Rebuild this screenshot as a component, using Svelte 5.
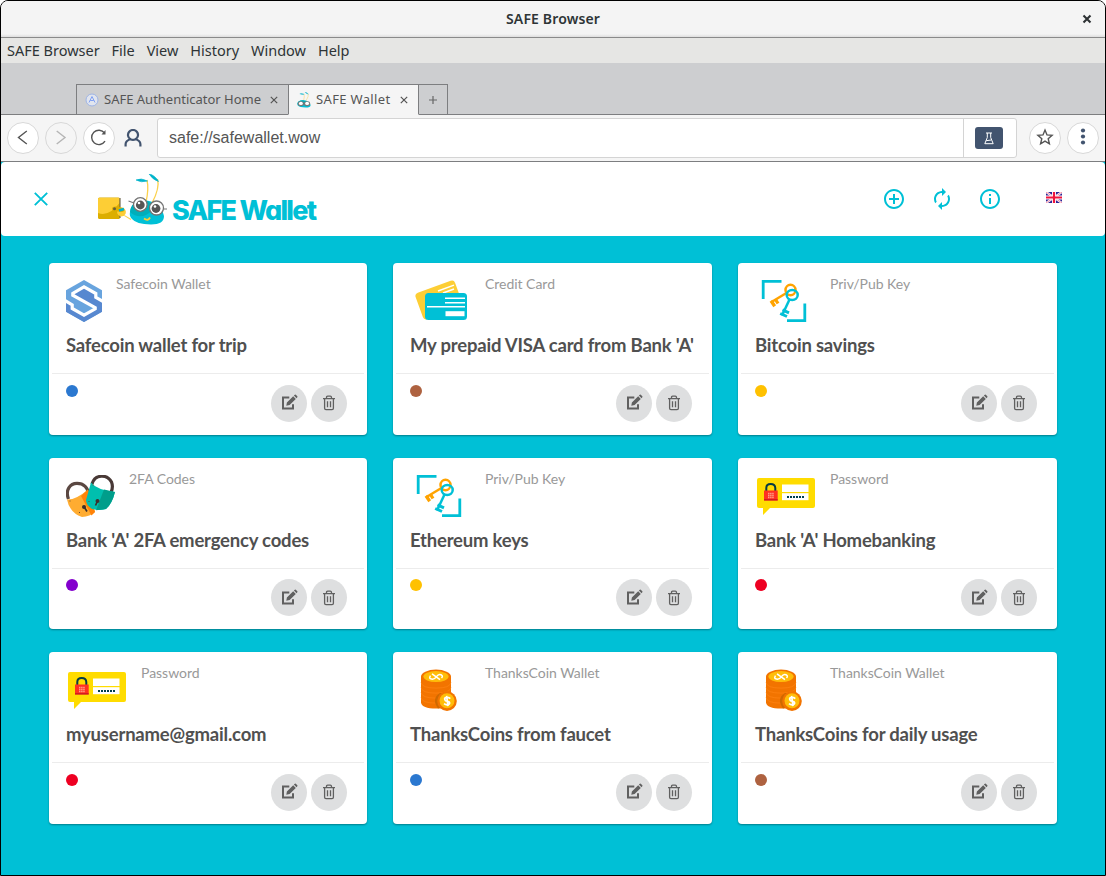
<script>
  const menus = ['SAFE Browser', 'File', 'View', 'History', 'Window', 'Help'];
  const cards = [
    { icon: 'safecoin', kind: 'Safecoin Wallet', title: 'Safecoin wallet for trip', color: '#2b78d0' },
    { icon: 'credit', kind: 'Credit Card', title: "My prepaid VISA card from Bank 'A'", color: '#ae6240' },
    { icon: 'keys', kind: 'Priv/Pub Key', title: 'Bitcoin savings', color: '#ffc100' },
    { icon: 'locks', kind: '2FA Codes', title: "Bank 'A' 2FA emergency codes", color: '#8300cd' },
    { icon: 'keys', kind: 'Priv/Pub Key', title: 'Ethereum keys', color: '#ffc100' },
    { icon: 'password', kind: 'Password', title: "Bank 'A' Homebanking", color: '#ee0022' },
    { icon: 'password', kind: 'Password', title: 'myusername@gmail.com', color: '#ee0022' },
    { icon: 'coins', kind: 'ThanksCoin Wallet', title: 'ThanksCoins from faucet', color: '#2b78d0' },
    { icon: 'coins', kind: 'ThanksCoin Wallet', title: 'ThanksCoins for daily usage', color: '#ae6240' }
  ];
  const iconWidth = { safecoin: 36, locks: 49, credit: 61, keys: 61, password: 61, coins: 61 };
</script>

{#snippet cardIcon(name)}
  <svg class="kind-icon" width={iconWidth[name]} height="42" viewBox="0 0 {iconWidth[name]} 42">
    {#if name === 'safecoin'}
      <clipPath id="hex"><path d="M18 0 36 10.300V31.700L18 42 0 31.700V10.300Z" /></clipPath>
      <g clip-path="url(#hex)">
        <rect width="36" height="42" fill="#68a4de" />
        <path fill="#5788d0" d="M38 22 29.800 17.300V13.500L18 6.800 6.800 13.300V15.200L29.200 27.600V28.800L18 35.200 6.200 28.500V25L-2 20V44H38Z" />
        <path fill="none" stroke="#fff" stroke-width="3.200" d="M38 22 29.800 17.300V13.500L18 6.800 6.800 13.300V15.200L29.200 27.600V28.800L18 35.200 6.200 28.500V25L-2 20" />
      </g>
    {:else if name === 'credit'}
      <rect x="8" y="6" width="42" height="28" rx="3.5" fill="#fdce35" transform="rotate(-20 29 20)" />
      <path d="M28 11 44 5.2M33 13 44 9" stroke="#fff" stroke-width="1.4" />
      <rect x="15" y="13" width="42" height="27" rx="3.5" fill="#00c0d6" />
      <path d="M35 18.3h20M35 22.8h20M17 26.8h38" stroke="#fff" stroke-width="1.5" />
      <rect x="35.5" y="31.2" width="19" height="5" fill="#fff" />
    {:else if name === 'keys'}
      <path d="M8.2 19V1.3H26.5M32 40.7H49.8V23.5" fill="none" stroke="#00c0d6" stroke-width="2.8" />
      <g fill="none" stroke="#ffa300" stroke-width="2.5">
        <ellipse cx="35.5" cy="10" rx="5" ry="5.2" />
        <path d="M31 13.2 16.500 22" />
        <path d="M16 20.800 19.700 26.200M20.500 19.500l2.500 4" stroke-width="3.3" />
      </g>
      <g fill="none" stroke="#00c0d6" stroke-width="2.5">
        <ellipse cx="37.200" cy="15" rx="5.500" ry="5" />
        <path d="M34.500 19.500 27 35.500" />
        <path d="M25.200 33.500 32 36.500M27.500 29.800l6.500 3" stroke-width="3" />
      </g>
    {:else if name === 'locks'}
      <path d="M2.500 24C-1 15 4 8.400 11 8.400S22 13 22 18" fill="none" stroke="#5a4741" stroke-width="3.2" />
      <path d="M1 24.500Q10 25 22 14.500L29 37Q24 41.500 16 42 8 39 5 34Q2 30 1 24.500Z" fill="#ffac31" />
      <path d="M15 21 22 14.500 29 37 25.500 40.500Z" fill="#ff8208" />
      <path d="M26 9C29-1 41-1 45.500 7Q47.500 12 45 17.500" fill="none" stroke="#493936" stroke-width="3.2" />
      <path d="M25 7.500Q31 15 49 17 46 29 40 34 34 36 26 34 20 30 20 25Z" fill="#00bfae" />
      <path d="M38 14.500 49 17Q46 29 40 34L30 35.300Z" fill="#009e8b" />
      <g stroke="#3c302c" stroke-width="1.7"><path d="m17.500 31 3.500 5.500M32 25l-2.500 5.500" /></g>
      <circle cx="18" cy="32" r="2" fill="#3c302c" /><circle cx="31.500" cy="26" r="2" fill="#3c302c" />
      <path d="M3.500 26h1M13 37.500h1M26.500 10h1M22.500 26.500h1" stroke="#6c5033" />
    {:else if name === 'password'}
      <path d="M4 3H58Q60 3 60 5V31Q60 33 58 33H15L8 40V33H4Q2 33 2 31V5Q2 3 4 3Z" fill="#ffdc00" />
      <rect x="27" y="9.500" width="26.500" height="7.500" fill="#fff" /><rect x="27" y="18.200" width="26.500" height="7" fill="#fff" />
      <path d="M32 22h18" stroke="#003f4d" stroke-width="1.8" stroke-dasharray="2 1" />
      <path d="M11.300 16V13Q11.300 9 15.700 9T20.300 13V16" fill="none" stroke="#053b44" stroke-width="2" />
      <rect x="9" y="15.500" width="13.700" height="10" fill="#ff3021" />
      <path d="M9 24.800h13.700" stroke="#c91820" stroke-width="1.3" />
      <path d="M13 18.500h6M13 20.500h6M13 22.500h6" stroke="#ff9d86" stroke-width="1.4" stroke-dasharray="1.5 .6" />
    {:else}
      <g transform="translate(0 .6)">
        <path d="M11 7V33Q12 39 26 39T41 33V7Z" fill="#f27400" />
        <path d="M11 13Q12 18.500 26 18.500T41 13M11 18Q12 23.500 26 23.500T41 18M11 23Q12 28.500 26 28.500T41 23M11 28Q12 33.500 26 33.500T41 28" fill="none" stroke="#ff8412" stroke-width=".7" />
        <path d="M28 39Q21 29 30 23.500H41V34Z" fill="#cf6900" />
        <ellipse cx="26" cy="7" rx="15" ry="7" fill="#f27400" /><ellipse cx="26" cy="7" rx="12.600" ry="5.500" fill="#ffbd0a" />
        <path d="M20.500 6Q18.500 9 21.500 9.500T26.500 7 31 5.200 31.500 8.500M22 4.300l8 5.800" fill="none" stroke="#fff" stroke-width="1.5" />
        <circle cx="37" cy="31.500" r="9.800" fill="#f27400" /><circle cx="37" cy="31.200" r="7.500" fill="#ffbd0a" />
        <path d="M40.300 29Q38.500 27.500 36 28T35.500 31.200L39 32.200Q40.500 33.800 38.500 34.900T34 34M36.600 26.300l1.400 10.300" fill="none" stroke="#fff" stroke-width="1.7" />
      </g>
    {/if}
  </svg>
{/snippet}

{#snippet ant()}
  <path d="M48 28Q51 15 49 6" fill="none" stroke="#fbd14c" stroke-width="1.3" />
  <path d="M54 29Q62 14 59.500 5" fill="none" stroke="#fbd14c" stroke-width="1.3" />
  <path d="M38 6Q43 3.500 49.500 7 43 9 38 6ZM51 0Q57 1 60.500 7.500 55 6 51 0Z" fill="#00b4cb" stroke="#00b4cb" stroke-width=".6" />
  <path d="M32 38Q33 27 46 26.500 63 27 66 42 66 50.500 53 50.500 38 50 34 45 31 42 32 38Z" fill="#00c0d6" />
  <path d="M32 38Q33 27 46 26.500 54 27 56 35 43 48 32 38Z" fill="#00aeba" />
{/snippet}

<div class="window">
  <div class="titlebar">
    <span class="window-title">SAFE Browser</span>
    <svg class="window-close" width="10" height="10" viewBox="0 0 10 10"><path d="m1.500 1.500 7 7m0-7-7 7" stroke="#2d3234" stroke-width="2.1" /></svg>
  </div>
  <nav class="menubar">{#each menus as m}<span>{m}</span>{/each}</nav>

  <div class="tabs">
    <div class="tab first">
      <svg width="14" height="14" viewBox="0 0 14 14"><circle cx="7" cy="7" r="6" fill="#e1e5ee" stroke="#9eb4e5" /><path d="m4 9.500 3-6 3 6M5.200 7.500h3.600" fill="none" stroke="#80a1f3" /></svg>
      <span>SAFE Authenticator Home</span>
      <svg class="x" width="8" height="8" viewBox="0 0 8 8"><path d="m.8.8 6.400 6.400m0-6.400L.8 7.200" stroke="#555" stroke-width="1.2" /></svg>
    </div>
    <div class="tab active">
      <svg width="14" height="16" viewBox="31 0 36 52" preserveAspectRatio="none">{@render ant()}<circle cx="41" cy="38" r="8" fill="#777" /><circle cx="57" cy="38" r="8" fill="#777" /><circle cx="41" cy="37" r="5" fill="#fff" /><circle cx="57" cy="37" r="5" fill="#fff" /></svg>
      <span>SAFE Wallet</span>
      <svg class="x" width="8" height="8" viewBox="0 0 8 8"><path d="m.8.8 6.400 6.400m0-6.400L.8 7.200" stroke="#555" stroke-width="1.2" /></svg>
    </div>
    <div class="tab plus"><svg width="8" height="8" viewBox="0 0 8 8"><path d="M4 0v8M0 4h8" stroke="#666" stroke-width="1.2" /></svg></div>
  </div>

  <div class="toolbar">
    <span class="round"><svg width="32" height="32" viewBox="0 0 32 32"><path d="m19.800 9-8.300 6.500 8.300 6.500" /></svg></span>
    <span class="round disabled"><svg width="32" height="32" viewBox="0 0 32 32"><path d="m11.700 9 8.300 6.500-8.300 6.500" /></svg></span>
    <span class="round"><svg width="32" height="32" viewBox="0 0 32 32"><path d="M21.600 11A7.200 7.200 0 1 0 22 19.200" /><path d="M22.500 8v4.500h-4z" fill="#555" stroke="none" /></svg></span>
    <svg class="user" width="18" height="18" viewBox="0 0 18 18"><path d="M1.600 17.500V15Q1.800 11.500 6.500 10.300A5 5 0 1 1 11.500 10.300Q16.200 11.500 16.400 15V17.500M6.500 10.300Q9 11.600 11.500 10.300" /></svg>
    <div class="address">
      <span class="url">safe://safewallet.wow</span>
      <span class="lab"><span class="flask"><svg width="12" height="13" viewBox="0 0 12 13"><path d="M3 1h6M4.300 1v4.500L1.800 11.700h8.400L7.700 5.500V1M3.200 8.700l5-.7" fill="none" stroke="#fff" /></svg></span></span>
    </div>
    <span class="round star"><svg width="32" height="32" viewBox="-1 0 32 32"><path d="m15 8.100 2 4.800 5.100.4-3.900 3.400 1.200 5.100-4.400-2.700-4.400 2.700 1.200-5.100-3.900-3.400 5.100-.4z" /></svg></span>
    <span class="round"><svg width="32" height="32" viewBox="-1 0 32 32"><g fill="#42546f" stroke="none"><circle cx="15" cy="8.500" r="2.100" /><circle cx="15" cy="14.500" r="2.100" /><circle cx="15" cy="20.500" r="2.100" /></g></svg></span>
  </div>

  <main>
    <header>
      <svg class="close" width="14" height="14" viewBox="0 0 14 14"><path d="m.8.8 12.400 12.400m0-12.400L.8 13.200" stroke="#00c0d6" stroke-width="1.9" /></svg>
      <svg class="logo" width="70" height="52" viewBox="0 0 70 52">
        <path d="M21 40Q27 41 33 45.500" fill="none" stroke="#fbd14c" stroke-width="1.2" />
        {@render ant()}
        <rect x="0" y="23.500" width="22" height="21.500" rx="1.500" fill="#dcae00" />
        <path d="M0 39Q11 43 21.500 29V24H1Q0 24 0 25Z" fill="#fdce35" />
        <path d="M22 24v20" stroke="#6f6750" stroke-width="1.200" />
        <circle cx="23.500" cy="38" r="4.400" fill="#fdce35" />
        <path d="M14 34.500Q14 32.500 18 32.500L25 34Q28 37 24 38L16 37Q14 37 14 34.500Z" fill="#dcae00" /><circle cx="16.500" cy="34.800" r="1.500" fill="#665f3d" /><path d="m21 36.500 5-1.500" stroke="#00b4cb" stroke-width="2.800" />
        <path d="m30.500 27 7 2.500M62 35h7" stroke="#777" stroke-width="1.2" />
        <g fill="#fff" stroke="#747474" stroke-width="1.3"><circle cx="42.300" cy="30.500" r="6.800" /><circle cx="58.500" cy="34" r="7" /></g>
        <circle cx="42.300" cy="31" r="4.400" fill="#555" /><circle cx="58" cy="34.500" r="4.400" fill="#555" /><circle cx="41" cy="29" r="1.300" fill="#fff" /><circle cx="57" cy="32.500" r="1.300" fill="#fff" />
        <path d="M46 44.500Q50 47.500 52 43.500" fill="none" stroke="#fdce35" stroke-width="1.8" />
      </svg>
      <span class="brand">SAFE Wallet</span>
      <div class="actions">
        <svg width="24" height="24" viewBox="0 0 24 24"><path d="M13 7h-2v4H7v2h4v4h2v-4h4v-2h-4V7zm-1-5C6.480 2 2 6.480 2 12s4.480 10 10 10 10-4.480 10-10S17.520 2 12 2zm0 18c-4.410 0-8-3.590-8-8s3.590-8 8-8 8 3.590 8 8-3.590 8-8 8z" /></svg>
        <svg width="24" height="24" viewBox="0 0 24 24"><path d="M12 6v3l4-4-4-4v3c-4.420 0-8 3.580-8 8 0 1.570.46 3.030 1.240 4.260L6.700 14.800c-.45-.83-.7-1.790-.7-2.800 0-3.310 2.690-6 6-6zm6.760 1.740L17.300 9.200c.44.84.7 1.790.7 2.800 0 3.310-2.690 6-6 6v-3l-4 4 4 4v-3c4.420 0 8-3.580 8-8 0-1.570-.46-3.030-1.240-4.260z" /></svg>
        <svg width="24" height="24" viewBox="0 0 24 24"><path d="M11 17h2v-6h-2v6zm1-15C6.480 2 2 6.480 2 12s4.480 10 10 10 10-4.480 10-10S17.520 2 12 2zm0 18c-4.410 0-8-3.590-8-8s3.590-8 8-8 8 3.590 8 8-3.590 8-8 8zM11 9h2V7h-2v2z" /></svg>
      </div>
      <svg class="flag" width="16" height="11" viewBox="0 0 16 11"><rect width="16" height="11" fill="#2d2394" /><path d="m0 0 16 11M16 0 0 11" stroke="#fff" stroke-width="2.200" /><path d="m0 0 16 11M16 0 0 11" stroke="#f36b88" stroke-width=".8" /><path d="M8 0v11M0 5.500h16" stroke="#fff" stroke-width="4" /><path d="M8 0v11M0 5.500h16" stroke="#f0143c" stroke-width="2.200" /></svg>
    </header>

    <section class="grid">
      {#each cards as c}
        <article>
          <div class="top">
            <div class="kind">{@render cardIcon(c.icon)}<span>{c.kind}</span></div>
            <h2>{c.title}</h2>
          </div>
          <div class="bottom">
            <i class="dot" style="background:{c.color}"></i>
            <span class="btn"><svg width="18" height="18" viewBox="0 0 18 18"><path d="M9.300 3.500H3V14.500H13V10.300" fill="none" stroke="#606060" stroke-width="2" /><path d="m6.300 11.800.6-3.300L13.200 2.300l2.600 2.600-6.200 6.200zM13.900 1.600 14.800.8q.5-.5 1 0l1.500 1.500q.5.500 0 1l-.8.900z" fill="#606060" /></svg></span>
            <span class="btn"><svg width="14" height="16" viewBox="0 0 14 16"><path d="M1 3.700h12M4.500 3.500V2.500Q4.500 1.200 5.700 1.200h2.600Q9.500 1.200 9.500 2.500v1M2.600 4v9.300Q2.600 14.600 4 14.600h6Q11.400 14.600 11.400 13.300V4M5.500 6.200v6M8.500 6.200v6" fill="none" stroke="#606060" stroke-width="1.300" /></svg></span>
          </div>
        </article>
      {/each}
    </section>
  </main>
</div>

<style>
  :global(body) { margin: 0; background: #fff; }
  .window { box-sizing: border-box; width: 1106px; height: 876px; border: 1px solid #000; border-radius: 8px 8px 0 0; overflow: hidden; display: flex; flex-direction: column; background: #f4f4f4; font-family: "Noto Sans", sans-serif; color: #2e3436; }
  .titlebar { height: 36px; flex: none; display: grid; grid-template-columns: 1fr auto 1fr; align-items: center; border-bottom: 1px solid #8a8a8a; background: linear-gradient(#f4f4f4 33px, #dedede); }
  .window-title { grid-column: 2; margin-top: -2px; font-size: 14px; font-weight: 600; letter-spacing: .15px; }
  .window-close { justify-self: end; margin-right: 13px; }
  .menubar { box-sizing: border-box; height: 25px; flex: none; display: flex; align-items: center; gap: 11.900px; padding: 0 0 2px 6px; background: #e6e6e4; font-size: 14.500px; }
  .tabs { box-sizing: border-box; height: 52px; flex: none; display: flex; align-items: flex-end; padding-left: 75px; background: linear-gradient(#cdced0, #cdced0) top / 100% 51px no-repeat, #7d7e80; }
  .tab { box-sizing: border-box; height: 31px; display: flex; align-items: center; border: 1px solid #7d7e80; background: #cdced0; color: #555; font-size: 13px; }
  .tab span { margin: -1px 0 0 5px; white-space: nowrap; }
  .x { margin-left: auto; margin-right: 10px; }
  .first { width: 212px; padding-left: 8px; border-right: 0; }
  .active { width: 131px; padding-left: 8px; background: #f5f5f5; border-bottom-color: #f5f5f5; }
  .active span { letter-spacing: .35px; }
  .plus { width: 29px; justify-content: center; border-left: 0; }
  .toolbar { box-sizing: border-box; height: 47px; flex: none; display: flex; align-items: center; padding-left: 6px; background: #f5f5f5; border-bottom: 1px solid #7d7e80; }
  .round { box-sizing: border-box; width: 32px; height: 32px; margin-right: 6px; border: 1px solid #d8d8d8; border-radius: 50%; background: #fff; display: flex; align-items: center; justify-content: center; }
  .round svg { flex: none; fill: none; stroke: #555; stroke-width: 1.400; }
  .disabled { background: #f5f5f5; }
  .round.disabled svg { stroke: #b5b5b5; }
  .user { margin: 0 15px 0 3px; fill: none; stroke: #42546f; stroke-width: 2.200; }
  .address { box-sizing: border-box; width: 860px; height: 40px; display: flex; border: 1px solid #d4d4d4; border-radius: 3px; background: #fff; }
  .url { flex: 1; padding-left: 11px; font: 16px/38px "Liberation Sans", sans-serif; color: #555; }
  .lab { box-sizing: border-box; width: 53px; border-left: 1px solid #d4d4d4; display: flex; align-items: center; justify-content: center; }
  .flask { width: 28px; height: 22px; margin-right: 2px; border-radius: 3px; background: #42546f; display: flex; align-items: center; justify-content: center; }
  .star { margin-left: 12px; }
  main { flex: 1; background: #00c0d6; }
  header { box-sizing: border-box; height: 74px; display: flex; align-items: center; padding-left: 33px; background: #fff; border-radius: 4px; }
  .close { margin-right: 50px; }
  .logo { flex: none; margin-top: 1px; }
  .brand { width: 145px; margin: 23px 0 0 4px; font: 800 27px/1 Inter, sans-serif; font-feature-settings: "cv11"; letter-spacing: -1.750px; white-space: nowrap; color: #00c0d6; }
  .actions { display: flex; gap: 24px; margin-left: auto; fill: #00c0d6; }
  .flag { margin: -3px 43px 0 44px; }
  .grid { display: grid; grid-template-columns: 318px 319px 319px; grid-auto-rows: 171.500px; gap: 23px 26px; padding: 27.400px 48px 0; }
  article { box-sizing: border-box; border-radius: 4px; background: #fff; box-shadow: 0 1px 2px rgba(0,0,0,.35); font-family: Lato, sans-serif; padding: 0 3px; display: flex; flex-direction: column; }
  .top { box-sizing: border-box; height: 110.700px; padding: 16.800px 14px 0; border-bottom: 1px solid #ececec; }
  .kind { display: flex; color: #999; font-size: 14px; line-height: 18px; }
  .kind span { margin: -5px 0 0 14px; letter-spacing: -.03px; }
  .kind-icon { flex: none; }
  h2 { margin: 11.200px 0 0; font-size: 18.500px; line-height: 24px; font-weight: 700; letter-spacing: -.2px; white-space: nowrap; color: #505050; }
  .bottom { display: flex; gap: 4px; padding: 10.800px 17px 0 14px; }
  .dot { width: 12px; height: 12px; margin-right: auto; border-radius: 50%; }
  .btn { width: 36px; height: 37px; border-radius: 50%; background: #dedfe0; display: flex; align-items: center; justify-content: center; }
</style>
